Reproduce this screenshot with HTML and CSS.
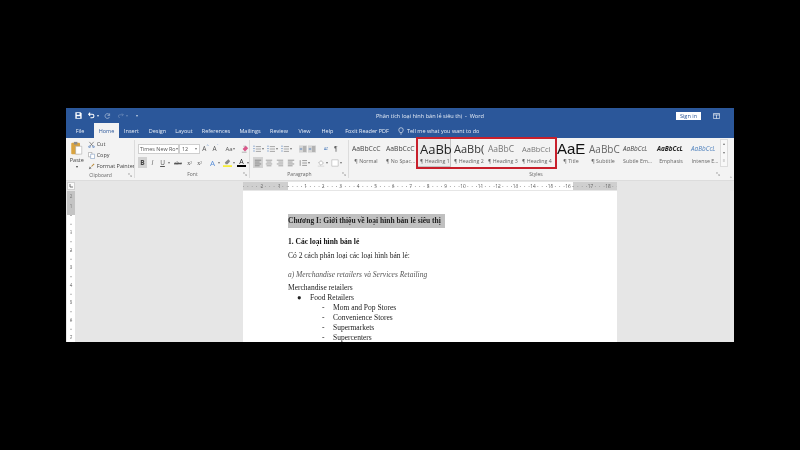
FILE: index.html
```html
<!DOCTYPE html>
<html lang="vi">
<head>
<meta charset="utf-8">
<title>Word</title>
<link rel="stylesheet" href="styles.css">
</head>
<body>
<div class="window">
  <header class="titlebar">
    <div class="qat">
      <svg class="q" viewBox="0 0 10 10"><path d="M.5.5h7.500l1.500 1.500v7.500H.5z" fill="#fff"/><path d="M2.500 1.500h4v2.500h-4z" fill="#2b579a"/><path d="M2.500 6h5v2.500h-5z" fill="#2b579a"/></svg>
      <svg class="q" viewBox="0 0 10 10"><path d="M3 1 1 3.200l2 2.200M1.400 3.200H6a2.400 2.400 0 0 1 0 5H3.500" fill="none" stroke="#fff" stroke-width="1.500"/></svg>
      <span class="qcaret">▾</span>
      <svg class="q dim" viewBox="0 0 10 10"><path d="M8 2v3H5M8 4.500A3.400 3.400 0 1 0 8 7" fill="none" stroke="#fff" stroke-width="1.100"/></svg>
      <svg class="q dimmer" viewBox="0 0 10 10"><path d="M7 2 9 4 7 6M9 4H4a2 2 0 0 0 0 4" fill="none" stroke="#fff"/></svg>
      <span class="qcaret dimmer">▾</span>
      <span class="qcaret more">▾</span>
    </div>
    <div class="doc-title">Phân tích loại hình bán lẻ siêu thị&nbsp; -&nbsp; Word</div>
    <div class="account">
      <button class="signin">Sign in</button>
      <svg class="restore" viewBox="0 0 10 8"><path d="M.5.5h9v7h-9zM.5 2.500h9M5 2.500v5" fill="none" stroke="#fff" stroke-width=".9"/></svg>
    </div>
  </header>

  <nav class="tabs">
    <span class="tab file">File</span>
    <span class="tab active">Home</span>
    <span class="tab t-insert">Insert</span>
    <span class="tab t-design">Design</span>
    <span class="tab t-layout">Layout</span>
    <span class="tab t-ref">References</span>
    <span class="tab t-mail">Mailings</span>
    <span class="tab t-review">Review</span>
    <span class="tab t-view">View</span>
    <span class="tab t-help">Help</span>
    <span class="tab t-foxit">Foxit Reader PDF</span>
    <span class="tab t-tell">
      <svg class="bulb" viewBox="0 0 8 10"><path d="M2.600 7.200C2.400 6 1 5.400 1 3.600a3 3 0 0 1 6 0C7 5.400 5.600 6 5.400 7.200zM3 9h2" fill="none" stroke="#fff" stroke-width=".8"/></svg>
      Tell me what you want to do
    </span>
  </nav>

  <section class="ribbon">
    <div class="group clipboard">
      <div class="group-body clip-body">
        <div class="paste">
          <svg class="paste-icon" viewBox="0 0 14 16"><rect x="1" y="2" width="10" height="13" rx="1" fill="#d9a441"/><rect x="4" y="1" width="4" height="3" fill="#8c8c8c"/><path d="M6 6h7v9H6z" fill="#fff" stroke="#a0a0a0" stroke-width=".6"/></svg>
          <span class="paste-label">Paste</span>
          <span class="mini-caret">▾</span>
        </div>
        <div class="clip-list">
          <div class="clip-item"><svg class="ci" viewBox="0 0 8 8"><path d="M1.500 1 5.800 6M6.500 1 2.200 6" stroke="#6a6a6a" stroke-width=".8" fill="none"/><circle cx="1.700" cy="6.600" r="1" fill="none" stroke="#3b6fb5" stroke-width=".7"/><circle cx="6.300" cy="6.600" r="1" fill="none" stroke="#3b6fb5" stroke-width=".7"/></svg>Cut</div>
          <div class="clip-item"><svg class="ci" viewBox="0 0 8 8"><path d="M.5.5h4v5h-4z" fill="#fff" stroke="#8a8a8a" stroke-width=".6"/><path d="M3 2.500h4.500v5H3z" fill="#fff" stroke="#6f8fb8" stroke-width=".6"/></svg>Copy</div>
          <div class="clip-item"><svg class="ci" viewBox="0 0 8 8"><path d="M4 4 7 1" stroke="#b98a3a" stroke-width="1.200"/><path d="M1 7 2 4l2 2z" fill="#6a6a6a"/></svg>Format Painter</div>
        </div>
      </div>
      <div class="group-label">Clipboard<svg class="launcher" viewBox="0 0 5 5"><path d="M.5.5h2M.5.5v2M1.500 1.500 4.500 4.500M4.500 2.500v2h-2" fill="none" stroke="#8a8a8a" stroke-width=".5"/></svg></div>
    </div>

    <div class="group font">
      <div class="group-body rows">
        <div class="row">
          <span class="combo name">Times New Ro<i>▾</i></span>
          <span class="combo size">12<i>▾</i></span>
          <span class="btn grow">A<sup>^</sup></span>
          <span class="btn grow">A<sup>ˇ</sup></span>
          <span class="btn aa">Aa<small>▾</small></span>
          <svg class="ic eraser" viewBox="0 0 10 10"><path d="M2 5 6 1l3 3-4 4z" fill="#d9578a"/><path d="M1 9h6M3 1.500h3" stroke="#7f7f7f" stroke-width=".7"/></svg>
        </div>
        <div class="row">
          <span class="btn fmt sel"><b>B</b></span>
          <span class="btn fmt"><em class="serif-i">I</em></span>
          <span class="btn fmt"><u>U</u></span><small class="cr">▾</small>
          <span class="btn fmt strike"><s>abc</s></span>
          <span class="btn fmt sub">x<sub>2</sub></span>
          <span class="btn fmt sub">x<sup>2</sup></span>
          <span class="btn fx texteffect">A</span><small class="cr">▾</small>
          <svg class="ic hl" viewBox="0 0 10 10"><path d="M2 5 6 1.500 8 3.500 5 7H3z" fill="#8a8a8a"/><path d="M0 8h10v2H0z" fill="#f6ee3a"/></svg><small class="cr">▾</small>
          <span class="btn fontcolor">A</span><small class="cr">▾</small>
        </div>
      </div>
      <div class="group-label">Font<svg class="launcher" viewBox="0 0 5 5"><path d="M.5.5h2M.5.5v2M1.500 1.500 4.500 4.500M4.500 2.500v2h-2" fill="none" stroke="#8a8a8a" stroke-width=".5"/></svg></div>
    </div>

    <div class="group para">
      <div class="group-body rows">
        <div class="row p-row">
          <svg class="ic" viewBox="0 0 10 10"><use href="#list"/></svg><small class="cr">▾</small>
          <svg class="ic" viewBox="0 0 10 10"><use href="#list"/></svg><small class="cr">▾</small>
          <svg class="ic" viewBox="0 0 10 10"><use href="#list"/></svg><small class="cr">▾</small>
          <svg class="ic wide-l" viewBox="0 0 10 10"><use href="#indent"/></svg>
          <svg class="ic" viewBox="0 0 10 10"><use href="#indent"/></svg>
          <span class="btn sort">A<br>Z</span>
          <span class="btn pilcrow">¶</span>
        </div>
        <div class="row p-row">
          <span class="align sel"><svg viewBox="0 0 10 10"><use href="#al"/></svg></span>
          <span class="align"><svg viewBox="0 0 10 10"><use href="#ac"/></svg></span>
          <span class="align"><svg viewBox="0 0 10 10"><use href="#ar"/></svg></span>
          <span class="align"><svg viewBox="0 0 10 10"><use href="#al"/></svg></span>
          <svg class="ic wide-l2" viewBox="0 0 10 10"><path d="M4 2h6M4 5h6M4 8h6M1.500 1.500v7" stroke="#6a6a6a" stroke-width=".8"/></svg><small class="cr">▾</small>
          <svg class="ic wide-l3" viewBox="0 0 10 10"><path d="M2 5 5 2l3 3-3 3z" fill="#fff" stroke="#8a8a8a" stroke-width=".7"/><path d="M1 9h8" stroke="#d8d8d8" stroke-width="1.200"/></svg><small class="cr">▾</small>
          <svg class="ic" viewBox="0 0 10 10"><path d="M1 1h8v8H1z" fill="#fff" stroke="#b5b5b5" stroke-width=".8"/></svg><small class="cr">▾</small>
        </div>
      </div>
      <div class="group-label">Paragraph<svg class="launcher" viewBox="0 0 5 5"><path d="M.5.5h2M.5.5v2M1.500 1.500 4.500 4.500M4.500 2.500v2h-2" fill="none" stroke="#8a8a8a" stroke-width=".5"/></svg></div>
    </div>

    <div class="group styles">
      <div class="gallery">
        <div class="style"><span class="sample s-body">AaBbCcC</span><span class="cap">¶ Normal</span></div>
        <div class="style"><span class="sample s-body">AaBbCcC</span><span class="cap">¶ No Spac...</span></div>
        <div class="highlight">
          <div class="style current"><span class="sample s-h1">AaBb</span><span class="cap">¶ Heading 1</span></div>
          <div class="style"><span class="sample s-h2">AaBb(</span><span class="cap">¶ Heading 2</span></div>
          <div class="style"><span class="sample s-h3">AaBbC</span><span class="cap">¶ Heading 3</span></div>
          <div class="style"><span class="sample s-h4">AaBbCcl</span><span class="cap">¶ Heading 4</span></div>
        </div>
        <div class="style title-style"><span class="sample s-title">AaE</span><span class="cap">¶ Title</span></div>
        <div class="style"><span class="sample s-sub">AaBbC</span><span class="cap">¶ Subtitle</span></div>
        <div class="style"><span class="sample s-body it">AaBbCcL</span><span class="cap">Subtle Em...</span></div>
        <div class="style"><span class="sample s-body it strong">AaBbCcL</span><span class="cap">Emphasis</span></div>
        <div class="style"><span class="sample s-body it blue">AaBbCcL</span><span class="cap">Intense E...</span></div>
        <div class="spinner"><span>▴</span><span>▾</span><span>≡</span></div>
      </div>
      <div class="group-label">Styles<svg class="launcher" viewBox="0 0 5 5"><path d="M.5.5h2M.5.5v2M1.500 1.500 4.500 4.500M4.500 2.500v2h-2" fill="none" stroke="#8a8a8a" stroke-width=".5"/></svg></div>
    </div>
    <div class="collapse">^</div>
  </section>

  <div class="ruler-row">
    <div class="tab-stop"><svg viewBox="0 0 6 6"><path d="M2 1v3h3" fill="none" stroke="#555" stroke-width=".8"/></svg></div>
    <div class="ruler">
      <div class="r-gray">
        <span class="n"></span><span class="n">2</span><span class="n">1</span>
      </div>
      <div class="r-white">
        <span class="n"></span><span class="n">1</span><span class="n">2</span><span class="n">3</span><span class="n">4</span><span class="n">5</span><span class="n">6</span><span class="n">7</span><span class="n">8</span><span class="n">9</span><span class="n">10</span><span class="n">11</span><span class="n">12</span><span class="n">13</span><span class="n">14</span><span class="n">15</span><span class="n">16</span>
      </div>
      <div class="r-gray">
        <span class="n"></span><span class="n">17</span><span class="n">18</span>
      </div>
    </div>
  </div>

  <main class="work">
    <aside class="vruler">
      <div class="v-gray"><span>2</span><span>1</span></div>
      <div class="v-white"><span></span><span>1</span><span>2</span><span>3</span><span>4</span><span>5</span><span>6</span><span>7</span></div>
    </aside>
    <div class="canvas">
      <article class="page">
        <h1 class="chapter"><span>Chương I: Giới thiệu về loại hình bán lẻ siêu thị</span></h1>
        <h2 class="sec">1. Các loại hình bán lẻ</h2>
        <p class="para-l">Có 2 cách phân loại các loại hình bán lẻ:</p>
        <p class="sub-h">a) Merchandise retailers và Services Retailing</p>
        <p class="line">Merchandise retailers</p>
        <p class="line lv1"><span class="mark">●</span>Food Retailers</p>
        <p class="line lv2"><span class="mark">-</span>Mom and Pop Stores</p>
        <p class="line lv2"><span class="mark">-</span>Convenience Stores</p>
        <p class="line lv2"><span class="mark">-</span>Supermarkets</p>
        <p class="line lv2"><span class="mark">-</span>Supercenters</p>
      </article>
    </div>
    <div class="scroll"></div>
  </main>
</div>

<svg class="defs" aria-hidden="true">
  <symbol id="list" viewBox="0 0 10 10"><path d="M3.500 2H10M3.500 5H10M3.500 8H10" stroke="#7a7a7a" stroke-width=".8"/><path d="M.5 1.500h1.500M.5 4.500h1.500M.5 7.500h1.500" stroke="#3b6fb5" stroke-width="1"/></symbol>
  <symbol id="indent" viewBox="0 0 10 10"><path d="M0 .5h10v9H0z" fill="#d5d5d5"/><path d="M5 2.500h4M5 5h4M5 7.500h4" stroke="#6a6a6a" stroke-width=".8"/><path d="M1 5h3" stroke="#3b6fb5"/></symbol>
  <symbol id="al" viewBox="0 0 10 10"><path d="M1 1.500h8M1 3.800h6M1 6.200h8M1 8.500h6" stroke="#666" stroke-width=".8"/></symbol>
  <symbol id="ac" viewBox="0 0 10 10"><path d="M1 1.500h8M2 3.800h6M1 6.200h8M2 8.500h6" stroke="#777" stroke-width=".8"/></symbol>
  <symbol id="ar" viewBox="0 0 10 10"><path d="M1 1.500h8M3 3.800h6M1 6.200h8M3 8.500h6" stroke="#777" stroke-width=".8"/></symbol>
</svg>
</body>
</html>
```

FILE: styles.css
```css
* { box-sizing: border-box; }
html, body { margin: 0; height: 100%; background: #000; overflow: hidden; }
body { padding: 108px 66px 0; font-family: "Open Sans", "Liberation Sans", sans-serif; }
.defs { width: 0; height: 0; position: absolute; }

.window { width: 668px; height: 234px; background: #e6e6e6; display: flex; flex-direction: column; overflow: hidden; filter: blur(.35px); }

/* title bar */
.titlebar { height: 15px; background: #2b579a; display: flex; align-items: center; color: #fff; flex: none; position: relative; }
.qat { width: 310px; display: flex; align-items: center; padding-left: 9px; }
.q { width: 7px; height: 7px; margin-right: 6px; flex: none; }
.qcaret { font-size: 4px; color: #dfe7f3; margin: 0 5px 0 -4px; }
.dim { opacity: .55; }
.dimmer { opacity: .3; }
.more { margin-left: 3px; opacity: .8; }
.doc-title { width: 104px; font-size: 5.600px; white-space: nowrap; color: #e8eef7; text-align: center; }
.account { margin-left: auto; display: flex; align-items: center; padding-right: 14px; }
.signin { width: 25px; height: 8px; border: 0; padding: 0; background: #fff; color: #2b579a; font: 5.600px "Open Sans", sans-serif; line-height: 8px; }
.restore { width: 7px; height: 6px; margin-left: 12px; }

/* tabs */
.tabs { height: 15px; background: #2b579a; display: flex; flex: none; color: #e8eef7; font-size: 5.500px; align-items: stretch; white-space: nowrap; }
.tab { display: flex; align-items: center; justify-content: center; }
.file { width: 28px; }
.active { width: 25px; background: #f3f3f3; color: #2b579a; }
.t-insert { width: 25px; }
.t-design { width: 27px; }
.t-layout { width: 26px; }
.t-ref { width: 38px; }
.t-mail { width: 30px; }
.t-review { width: 28px; }
.t-view { width: 23px; }
.t-help { width: 23px; }
.t-foxit { width: 56px; }
.t-tell { padding-left: 3px; }
.bulb { width: 6px; height: 8px; margin-right: 3px; }

/* ribbon */
.ribbon { height: 43px; background: #f3f3f3; display: flex; flex: none; color: #444; position: relative; border-bottom: 1px solid #dcdcdc; }
.group { position: relative; display: flex; flex-direction: column; height: 100%; flex: none; }
.group::after { content: ""; position: absolute; right: 0; top: 2px; bottom: 2px; width: 1px; background: #dcdcdc; }
.styles::after { display: none; }
.group-body { flex: 1; }
.group-label { height: 10px; font-size: 5px; color: #666; text-align: center; line-height: 9px; position: relative; }
.launcher { position: absolute; right: 3px; top: 2px; width: 4px; height: 4px; }

.clipboard { width: 69px; }
.clip-body { display: flex; padding: 3px 0 0 3px; }
.paste { width: 16px; display: flex; flex-direction: column; align-items: center; font-size: 5.500px; }
.paste-icon { width: 13px; height: 14px; }
.paste-label { line-height: 7px; margin-top: 2px; }
.mini-caret { font-size: 4px; line-height: 4px; margin-top: 1px; }
.clip-list { margin-left: 3px; display: flex; flex-direction: column; gap: 1px; margin-top: -2px; }
.clip-item { display: flex; align-items: center; height: 10px; font-size: 5.500px; white-space: nowrap; color: #444; }
.ci { width: 7px; height: 7px; margin-right: 2px; flex: none; }

.font { width: 115px; }
.para { width: 99px; }
.rows { display: flex; flex-direction: column; padding: 5px 0 0 3px; gap: 3px; }
.row { display: flex; align-items: center; height: 11px; gap: 1px; }
.combo { height: 10px; border: 1px solid #cfcfcf; background: #fff; font-size: 5.400px; line-height: 8px; padding-left: 1px; display: flex; justify-content: space-between; white-space: nowrap; overflow: hidden; color: #555; }
.combo i { font-size: 4px; font-style: normal; color: #777; }
.name { width: 41px; }
.size { width: 21px; margin-left: -1px; padding-left: 2px; padding-right: 2px; }
.btn { display: flex; align-items: center; justify-content: center; height: 11px; font-size: 6.500px; color: #555; }
.grow { width: 9px; }
.grow sup { font-size: 4px; line-height: 1; align-self: flex-start; margin-top: 1px; color: #3b6fb5; }
.aa { width: 12px; margin-left: 3px; font-size: 6px; }
.aa small, .cr { font-size: 4px; color: #777; }
.eraser { margin-left: 4px; }
.ic { width: 8px; height: 8px; flex: none; }
.fmt { width: 9px; font-family: "Liberation Serif", serif; }
.sel { background: #d2d2d2; }
.fmt b { font-family: "Open Sans", sans-serif; color: #444; }
.fmt u { font-family: "Open Sans", sans-serif; }
.serif-i { font-family: "Open Sans", sans-serif; }
.strike { width: 12px; margin-left: 1px; font-size: 5.500px; }
.sub { width: 9px; font-size: 6px; }
.sub sub, .sub sup { font-size: 3.500px; line-height: 0; }
.texteffect { width: 9px; margin-left: 3px; color: #5b8fd8; font-size: 8px; }
.hl { margin-left: 2px; width: 9px; height: 9px; }
.fontcolor { width: 9px; margin-left: 1px; color: #222; font-size: 7px; border-bottom: 2px solid #000; height: 9px; }
.p-row { gap: 1px; }
.p-row .cr { margin-right: 2px; }
.wide-l { margin-left: 4px; }
.sort { width: 8px; margin-left: 5px; font-size: 3.500px; line-height: 4px; flex-direction: column; color: #3b6fb5; }
.sort br { display: none; }
.pilcrow { width: 8px; margin-left: 1px; font-family: "Liberation Sans", sans-serif; font-size: 7px; }
.align { width: 10px; height: 11px; padding: 1px; display: flex; align-items: center; }
.align svg { width: 8px; height: 8px; }
.wide-l2 { margin-left: 2px; }
.wide-l3 { margin-left: 4px; }

.styles { width: 374px; }
.gallery { height: 33px; display: flex; align-items: flex-start; }
.style { width: 34px; height: 29px; display: flex; flex-direction: column; align-items: flex-start; padding-left: 3px; flex: none; overflow: hidden; padding-top: 3px; white-space: nowrap; }
.sample { height: 16px; line-height: 16px; color: #222; display: block; }
.cap { font-size: 5.300px; color: #666; line-height: 9px; width: 28px; text-align: center; white-space: nowrap; }
.s-body { font-size: 6.800px; color: #444; }
.s-h1 { font-size: 13px; color: #222; }
.s-h2 { font-size: 11px; color: #333; }
.s-h3 { font-size: 8.500px; color: #777; }
.s-h4 { font-size: 7.500px; color: #777; }
.s-title { font-size: 15px; color: #111; font-family: "Liberation Sans", sans-serif; }
.s-sub { font-size: 10px; color: #666; }
.it { font-style: italic; font-size: 6.400px; }
.strong { font-weight: 700; color: #222; }
.blue { color: #4f81bd; }
.current { background: #ececec; box-shadow: inset 0 0 0 1px #c4c4c4; }
.highlight { display: flex; flex: none; height: 30px; width: 139px; outline: 2px solid #c8202c; outline-offset: -1px; }
.highlight .style { height: 29px; }
.title-style { width: 30px; padding-left: 1px; }
.spinner { width: 8px; height: 28px; margin: 1px 0 0 -2px; display: flex; flex-direction: column; flex: none; border: 1px solid #dcdcdc; background: #f8f8f8; }
.spinner span { flex: 1; font-size: 4px; text-align: center; line-height: 8px; color: #777; }
.collapse { position: absolute; right: 2px; bottom: 0; font-size: 4px; color: #777; }

/* rulers */
.ruler-row { height: 10px; flex: none; display: flex; background: #e6e6e6; }
.tab-stop { width: 8px; height: 8px; margin: 1px 0 0 1px; background: #fafafa; border: 1px solid #d0d0d0; }
.tab-stop svg { display: block; width: 100%; height: 100%; }
.ruler { display: flex; margin-left: 168px; height: 8px; margin-top: 1px; color: #666; font-size: 4.800px; line-height: 8px; }
.r-gray, .r-white { display: flex; flex: none; overflow: hidden; background-repeat: repeat-x; background-position: 0 3.500px; background-size: 4.375px 1px; background-image: linear-gradient(90deg, #a5a5a5 1px, transparent 1px); }
.r-gray { width: 45px; background-color: #cfcfcf; justify-content: flex-end; }
.r-white { width: 285px; background-color: #fff; }
.r-gray:last-child { width: 44px; justify-content: flex-start; }
.n { flex: none; width: 17.500px; text-align: center; }
.n:empty { width: 8.750px; }
.r-gray:first-child .n:empty { width: 0; }

/* work area */
.work { flex: 1; display: flex; min-height: 0; background: #e6e6e6; }
.vruler { width: 8px; margin-left: 1px; flex: none; display: flex; flex-direction: column; font-size: 4.500px; color: #777; overflow: hidden; }
.v-gray { height: 24px; background: #c4c4c4; display: flex; flex-direction: column; flex: none; }
.v-gray span { height: 10px; text-align: center; line-height: 10px; }
.v-white { background: #fff; flex: 1; display: flex; flex-direction: column; background-image: linear-gradient(#b5b5b5 1px, transparent 1px); background-size: 2px 8.750px; background-position: center 0; background-repeat: repeat-y; }
.v-white span { flex: none; height: 17.500px; line-height: 17.500px; text-align: center; }
.v-white span:empty { height: 9px; }
.canvas { flex: 1; min-width: 0; display: flex; padding-left: 168px; overflow: hidden; }
.page { width: 374px; flex: none; height: 100%; background: #fff; padding: 23px 0 0 45px; color: #222; font-family: "Liberation Serif", serif; font-size: 7.500px; line-height: 10px; overflow: hidden; }
.page p, .page h1, .page h2 { margin: 0; font-size: inherit; }
.chapter { height: 14px; width: 157px; background: #c0c0c0; line-height: 13px; font-weight: 700; white-space: nowrap; }
.sec { font-weight: 700; margin-top: 9px !important; height: 10px; line-height: 10px; color: #111; }
.para-l { margin-top: 4px !important; height: 10px; }
.sub-h { margin-top: 9px !important; height: 10px; font-style: italic; color: #555; }
.line { height: 10px; white-space: nowrap; }
.sub-h + .line { margin-top: 3px; }
.lv1 { padding-left: 11px; }
.lv2 { padding-left: 34px; }
.mark { display: inline-block; }
.lv1 .mark { width: 11px; font-size: 7.500px; margin-left: -2px; padding-right: 2px; box-sizing: content-box; }
.lv2 .mark { width: 11px; }
.scroll { width: 4px; flex: none; background: #e9e9e9; }
```
